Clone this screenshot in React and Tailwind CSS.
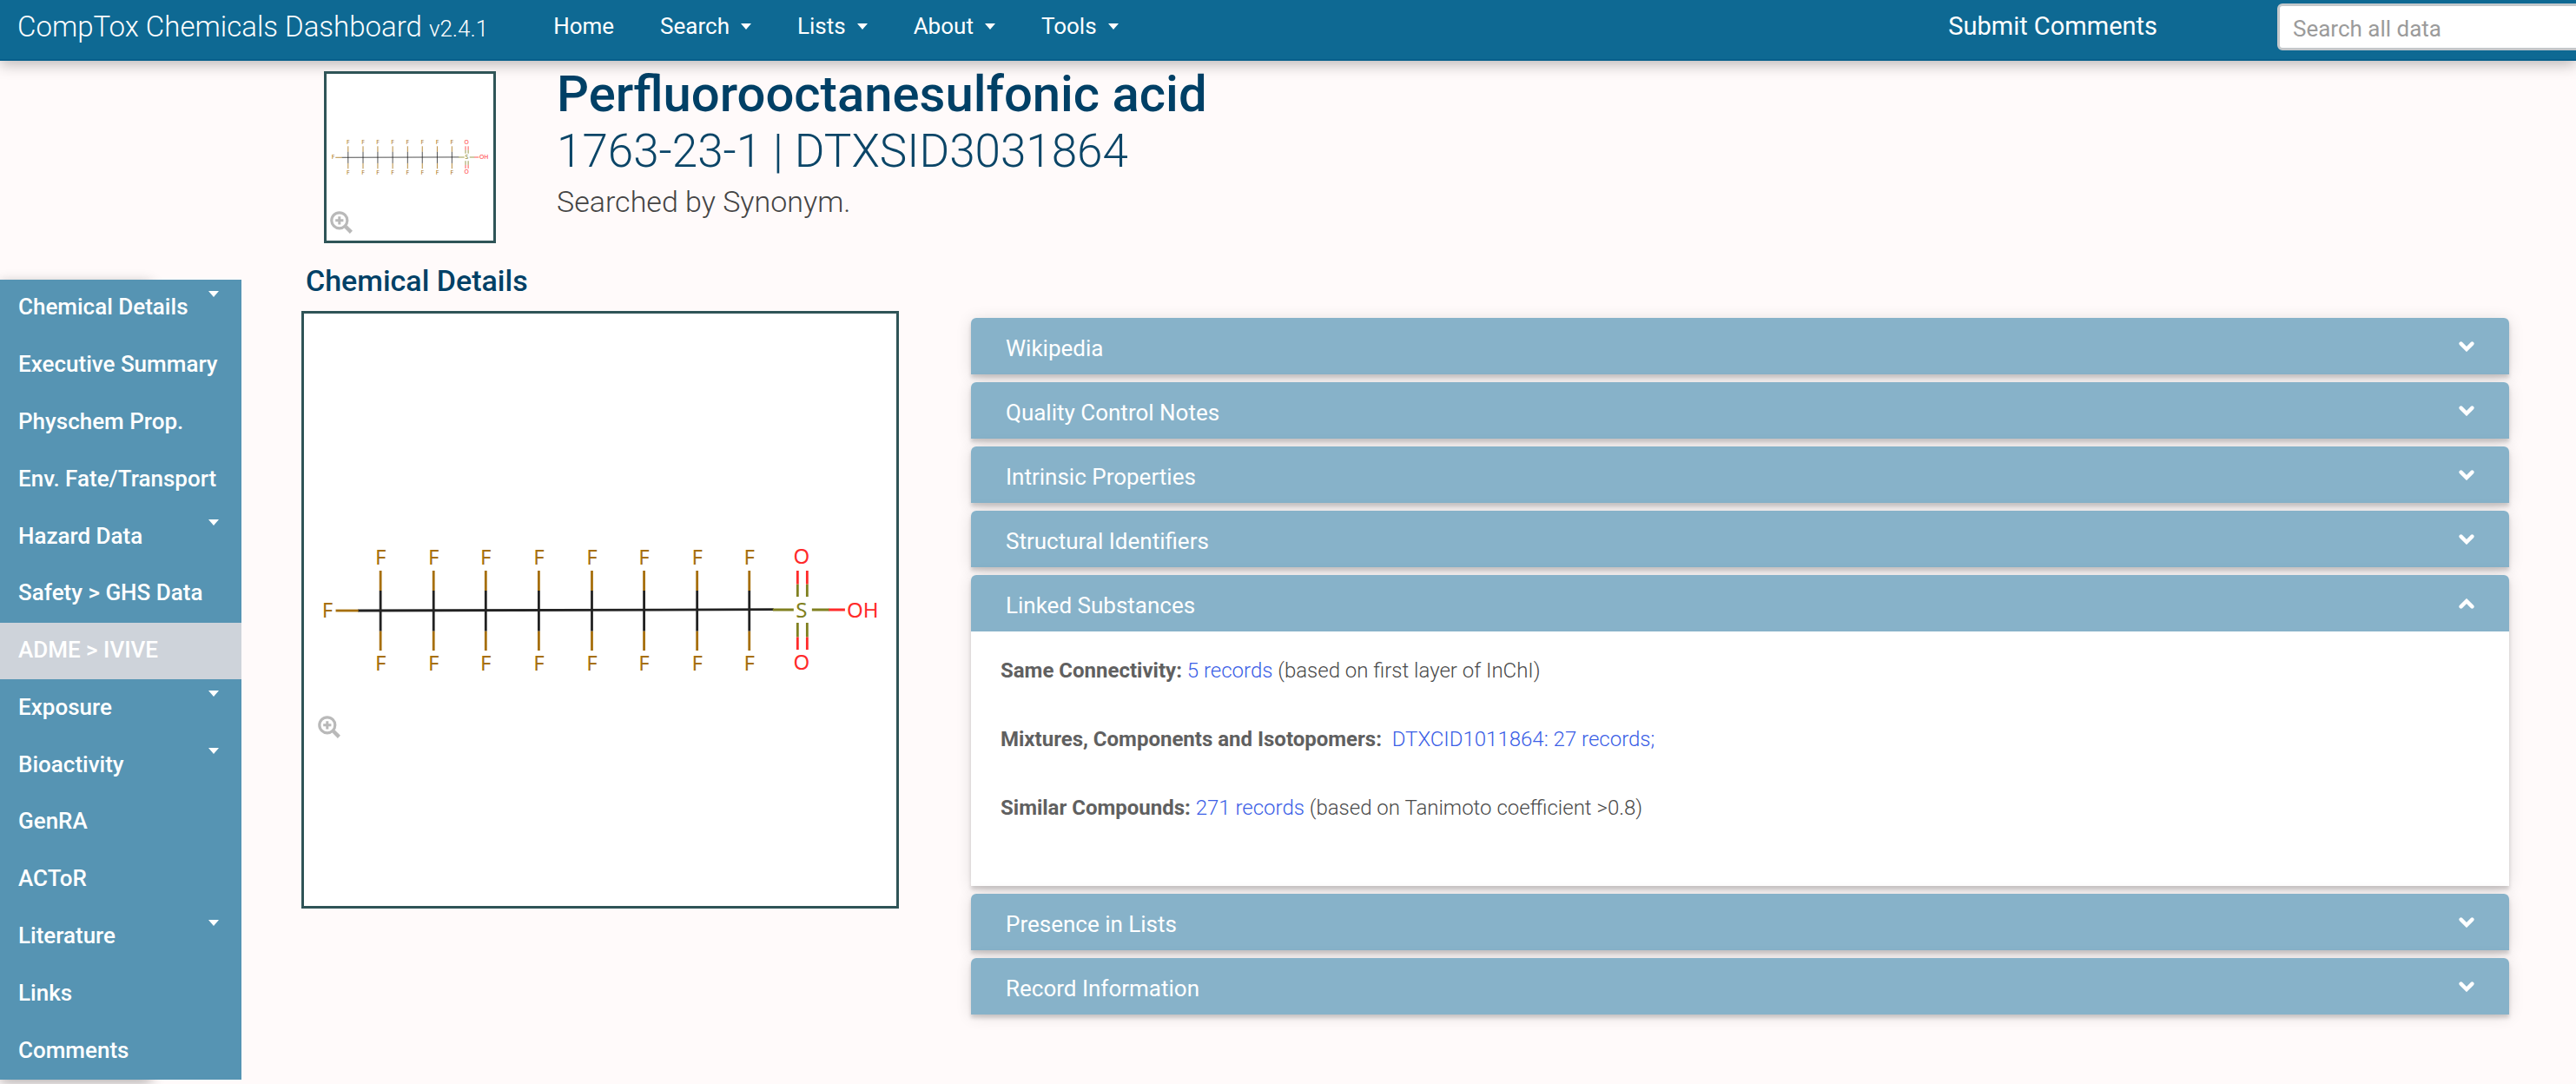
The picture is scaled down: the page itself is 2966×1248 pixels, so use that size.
import React, { useState } from "react";

const GOLD = "#a66f0c";
const RED = "#ff2a2a";
const OLIVE = "#808020";
const CARBONS = [91, 152, 212, 273, 334, 394, 455, 515];

const NAV = [
  { label: "Home" },
  { label: "Search", menu: true },
  { label: "Lists", menu: true },
  { label: "About", menu: true },
  { label: "Tools", menu: true },
];

const SECTIONS = [
  { label: "Chemical Details", menu: true },
  { label: "Executive Summary" },
  { label: "Physchem Prop." },
  { label: "Env. Fate/Transport" },
  { label: "Hazard Data", menu: true },
  { label: "Safety > GHS Data" },
  { label: "ADME > IVIVE", active: true },
  { label: "Exposure", menu: true },
  { label: "Bioactivity", menu: true },
  { label: "GenRA" },
  { label: "ACToR" },
  { label: "Literature", menu: true },
  { label: "Links" },
  { label: "Comments" },
];

function Caret({ className = "" }) {
  return (
    <svg viewBox="0 0 12 7" className={"h-[7px] w-3 shrink-0 fill-white " + className} aria-hidden="true">
      <path d="M0 0H12L6 7Z" />
    </svg>
  );
}

function Chevron({ open }) {
  return (
    <svg viewBox="0 0 18 12" className="h-3 w-[18px] shrink-0" fill="none" stroke="#fff" strokeWidth="4.4" strokeLinecap="round" aria-hidden="true">
      <path d={open ? "M2.6 9.4L9 3L15.4 9.4" : "M2.6 2.6L9 9L15.4 2.6"} />
    </svg>
  );
}

function ZoomButton({ className }) {
  return (
    <button type="button" aria-label="Enlarge structure" className={"absolute " + className}>
      <svg viewBox="0 0 26 26" className="size-[26px]" fill="none" stroke="#b9b9b9" aria-hidden="true">
        <circle cx="10.8" cy="10.8" r="9" strokeWidth="3.2" />
        <path d="M10.8 6.2V15.4M6.2 10.8H15.4" strokeWidth="3" />
        <path d="M17.8 17.8L24.4 24.4" strokeWidth="4.4" />
      </svg>
    </button>
  );
}

function Structure() {
  return (
    <svg viewBox="3 3 681 681" className="block h-full w-full" role="img" aria-label="Perfluorooctanesulfonic acid structure">
      <g strokeWidth="2.8" fill="none">
        <path d="M65 344.5L543 343.2" stroke="#222" />
        <path d="M39.500 344.5H65.500" stroke={GOLD} />
        {CARBONS.map((x) => (
          <g key={x}>
            <path d={`M${x} 298.500V321.500M${x} 368V390.500`} stroke={GOLD} />
            <path d={`M${x} 321.500V368`} stroke="#222" />
          </g>
        ))}
        <path d="M542 343.500H566M587 343.500H607M570.5 314V328.500M581.5 314V328.500M570.5 358.500V375M581.5 358.500V375" stroke={OLIVE} />
        <path d="M606.500 343.500H625M570.5 298.500V314M581.5 298.500V314M570.5 375V389.500M581.5 375V389.500" stroke={RED} />
      </g>
      <g fontFamily="'Noto Sans', sans-serif" fontSize="24" textAnchor="middle">
        <g fill={GOLD}>
          <text x="30" y="352">F</text>
          {CARBONS.map((x) => (
            <g key={x}>
              <text x={x} y="292">F</text>
              <text x={x} y="413">F</text>
            </g>
          ))}
        </g>
        <text x="575" y="352" fill={OLIVE}>S</text>
        <g fill={RED}>
          <text x="575" y="291">O</text>
          <text x="575" y="412">O</text>
          <text x="627" y="352" textAnchor="start">OH</text>
        </g>
      </g>
    </svg>
  );
}

function Panel({ title, defaultOpen = false, children }) {
  const [open, setOpen] = useState(defaultOpen);
  return (
    <section className="rounded-t-md bg-white shadow-[0_4px_4px_rgba(0,0,0,0.16),0_2px_18px_rgba(0,0,0,0.12)]">
      <h3>
        <button
          type="button"
          aria-expanded={open}
          onClick={() => setOpen(!open)}
          className="flex h-[65px] w-full items-center justify-between rounded-t-md bg-[#87b2c9] px-[40px] text-[26px] text-white"
        >
          <span className="pt-[6px]">{title}</span>
          <Chevron open={open} />
        </button>
      </h3>
      {open && <div className="min-h-[293px]">{children}</div>}
    </section>
  );
}

export default function App() {
  return (
    <div className="min-h-screen overflow-hidden bg-[#fffafa] font-['Roboto',sans-serif]">
      <header className="relative flex h-[70px] items-center border-b-2 border-[#085f8b] bg-[#0e6993] pb-[6px] pl-[20px] text-white shadow-[0_4px_16px_rgba(0,0,0,0.28)]">
        <a href="#" className="text-[33px] font-light">
          CompTox Chemicals Dashboard <span className="text-[26px]">v2.4.1</span>
        </a>
        <nav className="ml-[75px] flex gap-[53px] text-[26px]">
          {NAV.map((n) =>
            n.menu ? (
              <button key={n.label} type="button" className="flex items-center gap-[13px] pb-[2px]">
                {n.label}
                <Caret />
              </button>
            ) : (
              <a key={n.label} href="#" className="pb-[2px]">{n.label}</a>
            )
          )}
        </nav>
        <a href="#" className="ml-auto pr-[138px] text-[29px]">Submit Comments</a>
        <input
          type="search"
          aria-label="Search all data"
          placeholder="Search all data"
          className="-mr-4 h-[54px] w-[360px] rounded-md border-3 border-[#c4c8cb] bg-white px-[15px] pt-1 text-[26px] text-gray-700 placeholder:text-[#9b9b9b]"
        />
      </header>

      <div className="flex items-start">
        <aside className="mt-[252px] w-[278px] shrink-0">
          <nav aria-label="Sections" className="w-[174px] shadow-[0_4px_14px_rgba(0,0,0,0.3)]">
            <ul className="flex min-h-[921px] w-[278px] flex-col bg-[#5694b3] text-[26px] font-medium text-white">
              {SECTIONS.map((s) => (
                <li key={s.label} className="flex flex-1">
                  <a
                    href="#"
                    className={"flex flex-1 items-start justify-between pr-[26px] pb-[2px] pl-[21px] " + (s.active ? "bg-[#ced3da]" : "")}
                  >
                    <span className="self-center">{s.label}</span>
                    {s.menu && <Caret className="mt-[13px]" />}
                  </a>
                </li>
              ))}
            </ul>
          </nav>
        </aside>

        <main className="ml-[69px] flex-1">
          <div className="flex items-start gap-[70px] pl-[26px]">
            <div className="relative mt-3 size-[198px] shrink-0 border-3 border-[#2f5457] bg-white">
              <Structure />
              <ZoomButton className="bottom-[8px] left-[4px]" />
            </div>
            <div className="pt-1 text-[#0b4567]">
              <h1 className="text-[58px] leading-[68px] font-medium text-[#004066]">Perfluorooctanesulfonic acid</h1>
              <p className="text-[53px] leading-[64px] font-light">1763-23-1 | DTXSID3031864</p>
              <p className="text-[34px] leading-[52px] font-light text-[#444]">Searched by Synonym.</p>
            </div>
          </div>

          <h2 className="mt-[21px] pl-[5px] text-[34px] leading-[44px] font-medium text-[#004066]">Chemical Details</h2>

          <div className="mt-[13px] flex items-start gap-[83px] pr-[77px]">
            <div className="relative size-[688px] shrink-0 border-3 border-[#2f5457] bg-white">
              <Structure />
              <ZoomButton className="bottom-[193px] left-[16px]" />
            </div>

            <div className="mt-2 flex min-w-0 flex-1 flex-col gap-[9px]">
              <Panel title="Wikipedia" />
              <Panel title="Quality Control Notes" />
              <Panel title="Intrinsic Properties" />
              <Panel title="Structural Identifiers" />
              <Panel title="Linked Substances" defaultOpen>
                <div className="flex flex-col gap-[43px] px-[34px] pt-[27px] text-[24px] leading-[36px] font-light text-[#4a4a4a]">
                  <p>
                    <strong className="font-bold text-[#606060]">Same Connectivity:</strong>{" "}
                    <a href="#" className="text-[#3a5ee6]">5 records</a> (based on first layer of InChI)
                  </p>
                  <p>
                    <strong className="font-bold text-[#606060]">Mixtures, Components and Isotopomers:</strong>
                    {" \u00a0"}
                    <a href="#" className="text-[#3a5ee6]">DTXCID1011864: 27 records;</a>
                  </p>
                  <p>
                    <strong className="font-bold text-[#606060]">Similar Compounds:</strong>{" "}
                    <a href="#" className="text-[#3a5ee6]">271 records</a> (based on Tanimoto coefficient &gt;0.8)
                  </p>
                </div>
              </Panel>
              <Panel title="Presence in Lists" />
              <Panel title="Record Information" />
            </div>
          </div>
        </main>
      </div>
    </div>
  );
}
